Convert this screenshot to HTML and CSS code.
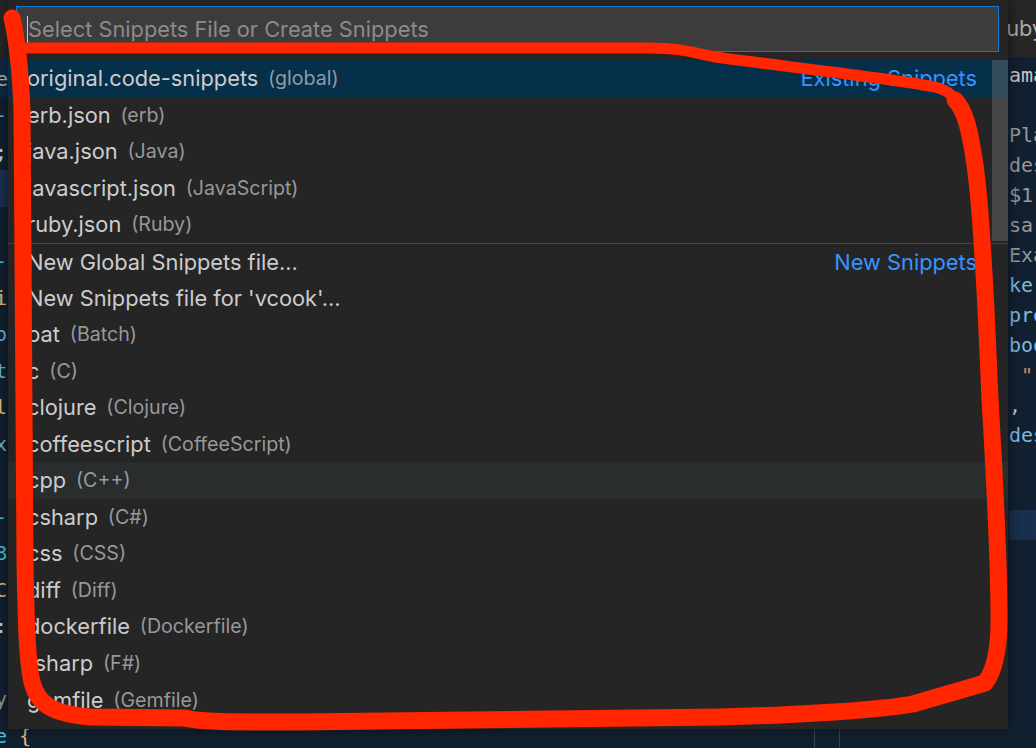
FILE: index.html
```html
<!DOCTYPE html>
<html lang="en">
<head>
<meta charset="utf-8">
<title>Select Snippets File</title>
<link rel="stylesheet" href="styles.css">
</head>
<body>
<div class="workbench">
  <div class="tabbar">
    <div class="tab-spacer"></div>
    <div class="tab">ruby.json</div>
  </div>
  <div class="editors">
    <div class="editor editor-left">
      <div class="crumbs">e</div>
      <div class="code">
        <div class="ln"><span class="c-cyan">-</span></div>
        <div class="ln"><span class="c-white">;</span></div>
        <div class="ln current"></div>
        <div class="ln"></div>
        <div class="ln"><span class="c-cyan">-</span></div>
        <div class="ln"><span class="c-yellow">i</span></div>
        <div class="ln"><span class="c-blue">o</span></div>
        <div class="ln"><span class="c-blue">t</span></div>
        <div class="ln"><span class="c-yellow">l</span></div>
        <div class="ln"><span class="c-blue">x</span></div>
        <div class="ln"></div>
        <div class="ln"><span class="c-cyan">-</span></div>
        <div class="ln"><span class="c-cyan">B</span></div>
        <div class="ln"><span class="c-yellow">C</span></div>
        <div class="ln"><span class="c-white">:</span></div>
        <div class="ln"></div>
        <div class="ln"><span class="c-gray">y/</span></div>
        <div class="ln"><span class="c-cyan">e</span> <span class="c-yellow">{</span></div>
      </div>
    </div>
    <div class="editor editor-right">
      <div class="rl c-light">ama</div>
      <div class="rl"></div>
      <div class="rl c-gray">Pla</div>
      <div class="rl c-gray">des</div>
      <div class="rl c-gray">$1,</div>
      <div class="rl c-gray">sar</div>
      <div class="rl c-gray">Exa</div>
      <div class="rl c-key">ke</div>
      <div class="rl c-key">pre</div>
      <div class="rl c-key">boo</div>
      <div class="rl"> <span class="c-str">"</span><span class="c-yellow">.</span></div>
      <div class="rl c-light">,</div>
      <div class="rl c-key">des</div>
      <div class="rl"></div>
      <div class="rl"></div>
      <div class="rl current"></div>
    </div>
  </div>
</div>

<div class="quick-input">
  <div class="qi-box">
    <span class="caret"></span>
    <span class="placeholder">Select Snippets File or Create Snippets</span>
  </div>
  <div class="qi-list">
    <div class="row focused"><span class="label">original.code-snippets</span><span class="desc">(global)</span><span class="detail">Existing Snippets</span></div>
    <div class="row"><span class="label">erb.json</span><span class="desc">(erb)</span></div>
    <div class="row"><span class="label">java.json</span><span class="desc">(Java)</span></div>
    <div class="row"><span class="label">javascript.json</span><span class="desc">(JavaScript)</span></div>
    <div class="row"><span class="label">ruby.json</span><span class="desc">(Ruby)</span></div>
    <div class="row sep"><span class="label">New Global Snippets file...</span><span class="detail">New Snippets</span></div>
    <div class="row"><span class="label">New Snippets file for 'vcook'...</span></div>
    <div class="row"><span class="label">bat</span><span class="desc">(Batch)</span></div>
    <div class="row"><span class="label">c</span><span class="desc">(C)</span></div>
    <div class="row"><span class="label">clojure</span><span class="desc">(Clojure)</span></div>
    <div class="row"><span class="label">coffeescript</span><span class="desc">(CoffeeScript)</span></div>
    <div class="row hover"><span class="label">cpp</span><span class="desc">(C++)</span></div>
    <div class="row"><span class="label">csharp</span><span class="desc">(C#)</span></div>
    <div class="row"><span class="label">css</span><span class="desc">(CSS)</span></div>
    <div class="row"><span class="label">diff</span><span class="desc">(Diff)</span></div>
    <div class="row"><span class="label">dockerfile</span><span class="desc">(Dockerfile)</span></div>
    <div class="row"><span class="label">fsharp</span><span class="desc">(F#)</span></div>
    <div class="row"><span class="label">gemfile</span><span class="desc">(Gemfile)</span></div>
    <div class="scrollbar"></div>
  </div>
</div>

<svg class="annot" width="1036" height="748" viewBox="0 0 1036 748">
  <path class="mark mark-thick" d="M 12 18 C 16 35, 20 60, 22 110 L 25 560 C 26 620, 27 660, 32 682 C 38 706, 55 714, 90 717 L 185 718 C 200 722, 230 722, 300 722 L 720 717 C 800 715, 880 710, 913 704 L 985 683 C 995 670, 999 650, 999 620 C 999 580, 996 500, 990 400 C 986 300, 980 200, 975 165 C 970 130, 965 110, 955 100"/>
  <path class="mark mark-thin" d="M 955 100 C 950 92, 945 90, 935 87 C 890 78, 780 66, 715 57 C 690 52, 680 48, 650 48 L 28 48"/>
</svg>
</body>
</html>
```

FILE: styles.css
```css
* {
  box-sizing: border-box;
  margin: 0;
  padding: 0;
}

html,
body {
  width: 1036px;
  height: 748px;
  overflow: hidden;
}

body {
  position: relative;
  background: #122132;
  font-family: "Inter", "Noto Sans", sans-serif;
}

/* ---------- background workbench ---------- */
.workbench {
  display: flex;
  flex-direction: column;
  height: 748px;
}

.tabbar {
  height: 57px;
  flex-shrink: 0;
  display: flex;
  background: #272727;
}

.tab-spacer {
  width: 998px;
  flex-shrink: 0;
}

.tab {
  color: #a9a9a9;
  font-size: 21.8px;
  line-height: 57px;
  white-space: nowrap;
}

.editors {
  flex: 1;
  display: flex;
  min-height: 0;
}

.editor {
  font-family: "DejaVu Sans Mono", "Liberation Mono", monospace;
  font-size: 20px;
  overflow: hidden;
}

.editor-left {
  width: 1008px;
  flex-shrink: 0;
  background-image:
    linear-gradient(to right, transparent 814px, #3a4657 814px, #3a4657 815px, transparent 815px),
    linear-gradient(to right, transparent 839px, #3a4657 839px, #3a4657 840px, transparent 840px);
}

.editor-left .crumbs {
  height: 40px;
  line-height: 40px;
  background: #0f2a44;
  color: #b9b9b9;
  padding-top: 2px;
  white-space: pre;
  text-indent: -4px;
}

.editor-left .ln {
  height: 36.5px;
  line-height: 36.5px;
  white-space: pre;
  text-indent: -5px;
}

.ln.current {
  background: #1b3250;
}

.editor-right {
  flex: 1;
  padding-top: 3px;
  padding-left: 1px;
}

.rl {
  height: 30px;
  line-height: 30px;
  white-space: pre;
}

.rl.current {
  background: #18304d;
}

.c-cyan { color: #4fc1e0; }
.c-white { color: #d4d4d4; }
.c-yellow { color: #e5c07b; }
.c-blue { color: #6cb6e0; }
.c-gray { color: #9a9a9a; }
.c-light { color: #c8c8c8; }
.c-key { color: #7fbbe0; }
.c-str { color: #d7875f; }

/* ---------- quick input widget ---------- */
.quick-input {
  position: absolute;
  left: 8px;
  top: 0;
  width: 1000px;
  height: 729px;
  background: #252526;
  box-shadow: 0 0 14px rgba(0, 0, 0, 0.55);
  padding: 6px 9px 0 8px;
  font-size: 21.8px;
}

.qi-box {
  height: 46px;
  display: flex;
  align-items: center;
  padding-left: 10px;
  background: #3c3c3c;
  border: 1px solid #0e7ad3;
}

.caret {
  width: 1px;
  height: 27px;
  background: #d0d0d0;
  flex-shrink: 0;
}

.placeholder {
  color: #8b8b8b;
  white-space: nowrap;
}

.qi-list {
  position: relative;
  margin: 8px -9px 0 -8px;
}

.row {
  height: 36.55px;
  display: flex;
  align-items: center;
  padding: 0 31px 0 19px;
  color: #cccccc;
  white-space: nowrap;
}

.row.focused {
  background: #062f4a;
}

.row.hover {
  background: #2a2d2e;
}

.row.sep {
  border-top: 1px solid #464646;
}

.desc {
  font-size: 0.9em;
  color: rgba(204, 204, 204, 0.7);
  margin-left: 0.5em;
}

.detail {
  margin-left: auto;
  color: #3794ff;
}

.scrollbar {
  position: absolute;
  top: 0;
  right: 0;
  width: 16px;
  height: 181px;
  background: rgba(121, 121, 121, 0.4);
}

/* ---------- hand-drawn annotation ---------- */
.annot {
  position: absolute;
  left: 0;
  top: 0;
  pointer-events: none;
}

.mark {
  fill: none;
  stroke: #ff2600;
  stroke-linecap: round;
  stroke-linejoin: round;
}

.mark-thick {
  stroke-width: 17;
}

.mark-thin {
  stroke-width: 11;
}
```
